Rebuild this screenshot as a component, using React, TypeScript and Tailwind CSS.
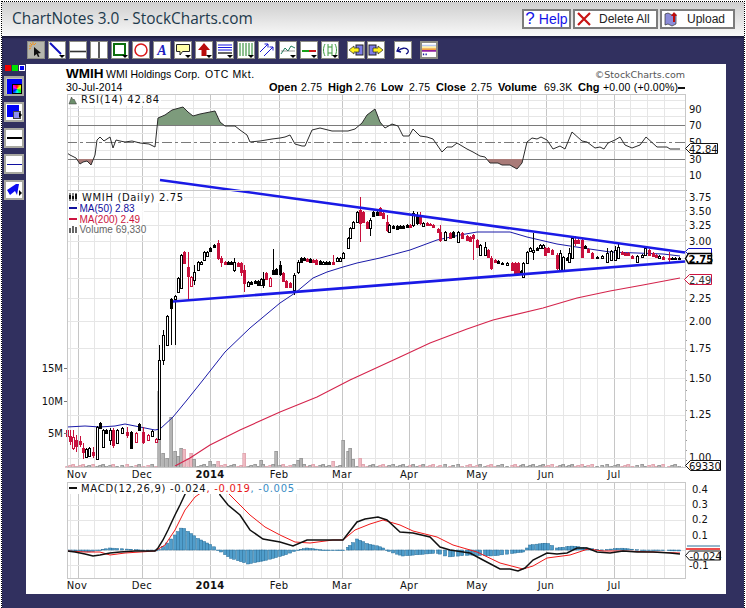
import type { ReactNode } from "react";

type Candle = [number, number, number, string, number?, number?];
type Pt = [number, number];

const candles: Candle[] = [
  [67,430,436,"r"],[70,436,441,"r",430,445],[73,437,448,"h",430,450],[76,440,446,"r",435,452],[80,441,444,"r",436,447],
  [83,448,452,"r",443,459],[86,449,457,"w"],[89,448,456,"w"],[93,452,455,"r",447,458],[97,427,459,"w"],[100,423,428,"k"],
  [103,430,447,"w"],[106,430,433,"k"],[110,430,440,"w",428,445],[113,430,445,"r",428,448],[117,430,443,"w"],[122,428,433,"w"],
  [127,432,435,"r",427,438],[131,432,448,"k"],[136,433,442,"h"],[139,424,430,"k"],[143,432,442,"r",427,444],[148,435,440,"h"],
  [152,431,436,"w"],[156,439,442,"h"],[159,360,439,"w",345,440],[163,335,360,"w",330,365],[167,316,345,"w"],
  [171,299,308,"k",298,345],[175,296,299,"w",295,345],[178,278,292,"w"],[181,255,288,"w"],[184,252,263,"r"],
  [188,267,276,"r",252,300],[191,277,286,"h"],[194,272,280,"w",265,285],[198,262,270,"w"],[201,262,264,"w"],
  [204,252,260,"w"],[207,252,256,"w"],[210,248,251,"k"],[214,245,247,"k"],[218,243,258,"r",240,260],[221,258,262,"r",256,267],
  [225,262,264,"r"],[228,262,264,"k"],[231,262,264,"k"],[234,262,270,"w",258,272],[238,263,266,"r"],[241,263,272,"r",262,276],
  [244,270,283,"r",265,292],[248,282,286,"w"],[251,282,284,"k"],[255,281,283,"k"],[258,281,285,"k"],[261,279,285,"w"],
  [263,279,285,"k",272,288],[266,273,279,"r"],[270,278,286,"h"],[273,270,274,"k",249,275],[276,269,274,"k"],[280,265,274,"k",261,276],
  [283,273,281,"r"],[286,281,287,"r"],[290,283,287,"r"],[294,275,290,"w",273,295],[298,262,272,"w",260,274],[301,258,262,"k"],
  [304,258,260,"k"],[307,259,261,"r"],[310,259,262,"k"],[313,260,262,"r"],[316,260,264,"r"],[320,261,264,"k"],[323,262,264,"w"],
  [326,262,264,"k"],[329,262,264,"k"],[333,262,264,"r",255,265],[337,258,261,"w"],[340,258,261,"w"],[343,253,258,"w"],
  [348,238,248,"w"],[350,228,238,"w"],[353,222,228,"w"],[357,212,222,"w"],[360,210,223,"r",197,242],[363,212,222,"r"],
  [367,222,228,"r"],[370,220,228,"w",218,236],[373,212,216,"k"],[377,212,215,"k"],[380,208,215,"r"],[383,213,218,"r"],
  [387,222,230,"r",215,232],[389,225,232,"w"],[393,226,228,"k"],[397,226,229,"k"],[400,226,228,"k"],[403,226,228,"k"],
  [407,225,227,"k"],[410,225,227,"r"],[413,213,225,"w",211,227],[417,215,223,"k",212,225],[420,215,223,"r",212,225],
  [423,223,226,"w"],[427,223,225,"r"],[430,224,225,"r"],[433,225,227,"r"],[438,229,232,"r"],[440,232,240,"r",225,242],
  [445,232,240,"w"],[450,233,238,"r"],[453,232,237,"k"],[458,232,242,"w"],[462,233,238,"r"],[467,236,240,"r"],[470,237,241,"r"],
  [473,235,238,"r",234,260],[477,240,247,"r"],[480,245,255,"w"],[485,247,255,"w",242,256],[488,250,257,"r"],[491,258,268,"r",256,270],
  [495,260,262,"r"],[498,261,263,"k"],[502,263,264,"w"],[507,263,265,"w"],[512,263,270,"r"],[515,263,273,"r"],[518,263,273,"r"],
  [521,271,273,"k"],[523,263,277,"w"],[527,252,263,"w"],[530,248,251,"w"],[533,250,252,"w",233,260],[537,248,250,"k"],
  [540,245,248,"w"],[543,245,248,"w"],[545,248,255,"r"],[548,248,252,"r"],[552,250,254,"r"],[557,255,268,"r",253,270],
  [560,253,270,"w",250,271],[563,257,270,"w"],[567,258,260,"k"],[569,253,262,"w",248,263],[572,238,258,"w"],[575,240,243,"r",236,246],
  [578,240,243,"r"],[582,240,257,"r"],[585,246,248,"k"],[588,249,252,"r"],[592,253,258,"r"],[597,257,258,"w"],[602,256,258,"w"],
  [607,253,262,"w",248,263],[611,251,260,"w"],[615,250,260,"w",246,261],[618,247,258,"w",243,259],[622,252,254,"r"],[625,253,255,"r"],
  [628,253,255,"r"],[632,256,258,"r"],[637,256,262,"w"],[642,255,257,"w"],[645,248,255,"w"],[649,250,255,"r"],[653,253,256,"r"],
  [656,255,257,"r"],[659,256,258,"w"],[663,257,259,"r"],[669,258,259,"r",252,263],[672,258,259,"k"],[675,258,259,"k"],[679,258,259,"k"],
];

const spikes: Pt[] = [
  [159,76],[163,14],[167,9],[171,50],[175,16],[178,11],[181,19],[184,18],[188,8],[191,14],[194,8],[211,6],[218,6],[243,14],
  [261,7],[277,16],[298,7],[301,9],[333,6],[344,27],[348,16],[350,19],[353,8],[360,9],[475,9],
];

const rsi: Pt[] = [
  [67,153],[70,155],[76,158],[80,164],[83,162],[87,161],[91,165],[95,155],[97,140],[100,137],[104,141],[110,137],[113,148],[116,140],[120,141],
  [125,142],[132,141],[140,143],[149,144],[155,147],[158,118],[165,115],[172,110],[183,107],[188,112],[193,116],[200,114],[215,111],[220,122],
  [225,126],[235,126],[240,130],[247,135],[250,142],[260,141],[272,139],[280,138],[285,137],[290,135],[295,144],[302,146],[305,146],[312,130],
  [320,128],[332,131],[345,131],[348,131],[355,129],[362,123],[367,115],[375,109],[380,122],[385,128],[392,124],[398,126],[403,136],[409,136],
  [413,129],[420,136],[427,137],[433,139],[442,152],[447,147],[452,147],[457,143],[467,149],[473,152],[480,156],[485,157],[490,163],[498,163],
  [502,165],[510,165],[517,169],[522,163],[527,142],[532,138],[537,139],[541,137],[547,140],[553,149],[560,146],[565,149],[572,132],[582,141],
  [587,142],[595,148],[600,147],[604,149],[608,143],[615,140],[620,137],[625,145],[632,148],[640,145],[646,137],[657,147],[667,147],[670,149],[680,149],
];

const ma50: Pt[] = [
  [67,427],[85,426],[100,427],[115,426],[125,424],[140,427],[155,430],[160,429],[173,417],[187,400],[203,380],[225,352],[250,328],[280,303],[295,293],
  [313,278],[327,272],[343,267],[357,263],[380,258],[410,250],[437,240],[460,235],[477,232],[510,232],[527,237],[557,244],[583,248],[610,252],[637,253],[663,254],[680,256],
];
const ma200: Pt[] = [
  [175,466],[190,458],[210,445],[240,430],[280,412],[317,397],[350,380],[400,357],[430,343],[467,329],[493,320],[543,308],[577,298],[610,291],[643,285],[680,278],
];
const macd: Pt[] = [
  [67,551],[75,552],[85,554],[93,556],[100,555],[110,553],[120,552],[135,551],[155,551],[158,548],[163,540],[168,530],[175,515],[180,505],[187,490],[195,478],
  [215,478],[220,495],[228,505],[240,515],[250,530],[263,539],[280,542],[293,546],[307,540],[333,540],[343,540],[357,522],[365,519],[378,517],[387,520],
  [400,532],[413,533],[430,537],[440,547],[450,550],[470,553],[483,560],[500,569],[510,569],[518,571],[525,568],[533,560],[547,553],[557,554],[567,553],
  [577,548],[587,548],[597,552],[610,553],[623,551],[637,552],[653,552],[670,553],[680,554],
];
const signal: Pt[] = [
  [67,551],[85,552],[100,552],[110,555],[125,553],[155,551],[165,545],[175,530],[185,510],[195,497],[205,490],[215,486],[225,490],[240,505],[250,515],[265,527],
  [280,535],[295,542],[310,543],[333,540],[343,540],[355,530],[370,524],[383,520],[400,525],[413,531],[437,537],[453,545],[477,552],[500,563],[523,569],[533,566],
  [547,558],[570,555],[588,549],[603,551],[623,551],[653,552],[680,553],
];
const hist: Pt[] = [
  [67,550],[90,552],[110,548],[157,551],[165,545],[175,535],[182,527],[197,538],[213,546],[218,550],[230,558],[248,564],[267,560],[285,555],[298,550],[307,548],
  [323,550],[345,550],[357,539],[368,544],[378,546],[383,548],[390,552],[403,556],[437,553],[448,557],[470,555],[493,556],[523,552],[530,545],[547,543],[557,548],
  [573,546],[587,548],[603,550],[620,548],[640,550],[680,551],
];

const pts = (p: Pt[]) => p.map((a) => a.join(",")).join(" ");

const lerp = (p: Pt[], x: number) => {
  for (let i = 1; i < p.length; i++) {
    if (x <= p[i][0]) {
      const t = (x - p[i - 1][0]) / (p[i][0] - p[i - 1][0]);
      return p[i - 1][1] + t * (p[i][1] - p[i - 1][1]);
    }
  }
  return p[p.length - 1][1];
};

const majors = [78, 142, 210, 279, 342, 409, 477, 546, 614];
const minors = [70, 94, 110, 126, 158, 175, 193, 226, 243, 261, 296, 312, 327, 358, 375, 392, 425, 441, 458, 493, 511, 528, 563, 580, 597, 630, 647, 664];
const months: [string, number][] = [["Nov", 77], ["Dec", 142], ["2014", 210], ["Feb", 279], ["Mar", 342], ["Apr", 409], ["May", 477], ["Jun", 546], ["Jul", 614]];
const rsiGrid = [100, 108, 116, 133, 150, 167, 176, 184];
const priceGrid = [197, 211, 225, 241, 258, 278, 298, 321, 348, 378, 415, 458];
const macdGrid = [489, 505, 520, 535, 550, 565];

function Grid({ top, bottom }: { top: number; bottom: number }) {
  return (
    <g shapeRendering="crispEdges">
      {minors.map((x) => (
        <line key={x} x1={x} x2={x} y1={top} y2={bottom} stroke="#e6e6e6" />
      ))}
      {majors.map((x) => (
        <line key={x} x1={x} x2={x} y1={top} y2={bottom} stroke="#c6c6c6" />
      ))}
    </g>
  );
}

function Label({ x, y, children, fill = "#111", anchor = "start", weight, spacing = 0.3 }: { x: number; y: number; children: ReactNode; fill?: string; anchor?: "start" | "middle" | "end"; weight?: string; spacing?: number }) {
  return (
    <text x={x} y={y} fill={fill} textAnchor={anchor} fontWeight={weight} letterSpacing={spacing}>
      {children}
    </text>
  );
}

function Chart() {
  return (
    <svg viewBox="26 64 700 530" className="h-[530px] w-[700px] bg-white font-['DejaVu_Sans',sans-serif] text-[10px]">
      <defs>
        <clipPath id="above70"><rect x="60" y="94" width="630" height="31" /></clipPath>
        <clipPath id="below30"><rect x="60" y="159" width="630" height="30" /></clipPath>
        <clipPath id="macdPanel"><rect x="67" y="482" width="618" height="96" /></clipPath>
      </defs>

      {/* heading */}
      <text x="66" y="78" fontSize="13.5" fontWeight="700" fontFamily="Liberation Sans">WMIH</text>
      <text x="106" y="78" fontSize="10.5" fontFamily="Liberation Sans">WMI Holdings Corp.</text>
      <text x="205" y="78" fontSize="10.5" fontFamily="Liberation Sans" letterSpacing="0.6">OTC Mkt.</text>
      <text x="66" y="91" fontSize="10.5" fontFamily="Liberation Sans" letterSpacing="0.1">30-Jul-2014</text>
      <text x="685" y="78" fill="#555" textAnchor="end" fontSize="9.500">©StockCharts.com</text>
      <g fontSize="11" fontFamily="Liberation Sans">
        {([["Open", 269], ["High", 328], ["Low", 381], ["Close", 436], ["Volume", 498], ["Chg", 578]] as [string, number][]).map(([t, x]) => (
          <text key={t} x={x} y="91" fontWeight="700">{t}</text>
        ))}
        {([["2.75", 301], ["2.76", 355], ["2.75", 409], ["2.75", 471], ["69.3K", 544], ["+0.00 (+0.00%)", 603]] as [string, number][]).map(([t, x]) => (
          <text key={x} x={x} y="91" fontSize="10.5" letterSpacing="0.2">{t}</text>
        ))}
      </g>
      <rect x="678" y="87" width="7" height="2" fill="#111" />

      {/* RSI panel */}
      <Grid top={94} bottom={190} />
      <g shapeRendering="crispEdges">
        {rsiGrid.map((y) => (
          <line key={y} x1="67" x2="685" y1={y} y2={y} stroke="#e6e6e6" />
        ))}
        <line x1="67" x2="685" y1="125" y2="125" stroke="#7a7a7a" />
        <line x1="67" x2="685" y1="159" y2="159" stroke="#7a7a7a" />
        <line x1="67" x2="685" y1="142" y2="142" stroke="#7a7a7a" strokeDasharray="10 3 3 3" />
      </g>
      <polygon points={pts(rsi)} fill="#7d9b7c" clipPath="url(#above70)" />
      <polygon points={pts(rsi)} fill="#a97b78" clipPath="url(#below30)" />
      <polyline points={pts(rsi)} fill="none" stroke="#2c2c2c" strokeWidth="1" />
      <rect x="67" y="94" width="618" height="96" fill="none" stroke="#c8c8c8" shapeRendering="crispEdges" />
      <rect x="68" y="95" width="93" height="11" fill="white" fillOpacity="0.9" />
      <path d="M69 104l2.5-7 1.5 3 1-1 2.5 5z" fill="#6d8f6c" stroke="#333" strokeWidth="0.5" />
      <Label x={81} y={103} spacing={0.8}>RSI(14) 42.84</Label>
      <g fill="#111">
        <text x="689" y="113">90</text>
        <text x="689" y="129">70</text>
        <text x="689" y="146">50</text>
        <text x="689" y="163">30</text>
        <text x="689" y="179">10</text>
      </g>

      {/* price panel */}
      <Grid top={190} bottom={467} />
      <g shapeRendering="crispEdges">
        {priceGrid.map((y) => (
          <line key={y} x1="67" x2="685" y1={y} y2={y} stroke="#e6e6e6" />
        ))}
      </g>
      <g shapeRendering="crispEdges">
        {candles.map(([x, , , kind], i) => {
          const s = spikes.find((p) => Math.abs(p[0] - x) < 1.5);
          const h = s ? s[1] : 1 + ((i * 7) % 3);
          const red = kind === "r" || kind === "h";
          return <rect key={i} x={x - 1.5} y={467 - h} width="3" height={h} fill={red ? "#efb9c1" : "#b4b4b4"} stroke={red ? "#d99ca8" : "#8a8a8a"} strokeWidth="0.6" />;
        })}
      </g>
      <polyline points={pts(ma200)} fill="none" stroke="#d4244c" strokeWidth="1.1" />
      <polyline points={pts(ma50)} fill="none" stroke="#1a1aa8" strokeWidth="1" />
      <g shapeRendering="crispEdges">
        {candles.map(([x, top, bot, kind, wt, wb], i) => {
          const red = kind === "r" || kind === "h";
          const color = red ? "#c8103c" : "#000";
          const fill = kind === "w" || kind === "h" ? "#fff" : color;
          return (
            <g key={i}>
              <line x1={x + 0.5} x2={x + 0.5} y1={wt ?? top - 1} y2={wb ?? bot + 1} stroke={color} />
              <rect x={x - 0.5} y={top + 0.5} width="2" height={bot - top} fill={fill} stroke={color} />
            </g>
          );
        })}
      </g>
      <line x1="160" y1="180" x2="685" y2="252.5" stroke="#1a1ae6" strokeWidth="2.6" />
      <line x1="173" y1="301.5" x2="685" y2="261.5" stroke="#1a1ae6" strokeWidth="2.6" />
      <line x1="67" x2="685" y1="467" y2="467" stroke="#bbb" strokeDasharray="1 2" />
      <rect x="67" y="190" width="618" height="277" fill="none" stroke="#c8c8c8" shapeRendering="crispEdges" />
      <line x1="686.5" x2="686.5" y1="190" y2="467" stroke="#999" strokeDasharray="1 9" />

      <rect x="68" y="192" width="116" height="11" fill="white" fillOpacity="0.85" />
      <rect x="68" y="204" width="76" height="31" fill="white" fillOpacity="0.85" />
      <path d="M70 193v8M73 193v8M76 193v8" stroke="#111" strokeWidth="1" />
      <path d="M69 195h2v4h-2zM72 196h2v3h-2zM75 194h2v5h-2z" fill="#111" />
      <Label x={82} y={201} spacing={0.65}>WMIH (Daily) 2.75</Label>
      <g fontFamily="Liberation Sans" fontSize="10">
        <rect x="69" y="207" width="8" height="2" fill="#10109c" />
        <Label x={79.5} y={212} fill="#10109c" spacing={0}>MA(50) 2.83</Label>
        <rect x="69" y="218" width="8" height="2" fill="#cc1440" />
        <Label x={79.5} y={223} fill="#cc1440" spacing={0}>MA(200) 2.49</Label>
        <path d="M69 228h2v5h-2zM72 226h2v7h-2zM75 227h2v6h-2z" fill="#666" />
        <Label x={79.5} y={233} fill="#666" spacing={0}>Volume 69,330</Label>
      </g>

      <g fill="#111">
        {([["3.75", 201], ["3.50", 215], ["3.25", 229], ["3.00", 245], ["2.25", 302], ["2.00", 325], ["1.75", 352], ["1.50", 382], ["1.25", 418], ["1.00", 461]] as [string, number][]).map(([t, y]) => (
          <text key={t} x="689" y={y}>{t}</text>
        ))}
        <text x="63" y="372" textAnchor="end">15M</text>
        <text x="63" y="405" textAnchor="end">10M</text>
        <text x="63" y="437" textAnchor="end">5M</text>
      </g>
      <g stroke="#777" shapeRendering="crispEdges">
        {[368, 401, 433].map((y) => (
          <line key={y} x1="64" x2="67" y1={y} y2={y} />
        ))}
      </g>

      {/* value tags */}
      <path d="M685.500 148.500l5-5h27v10h-27z" fill="white" stroke="#111" />
      <text x="689" y="152.500" fill="#111">42.84</text>
      <path d="M685.500 251.500l3-3h23v6h-23z" fill="white" stroke="#1010c0" />
      <path d="M685.500 258.500l3-5h23v10h-23z" fill="white" stroke="#000" strokeWidth="1.4" />
      <text x="688.500" y="262.500" fontWeight="700" fill="#000">2.75</text>
      <path d="M684.500 279.500l5-5h22v10h-22z" fill="white" stroke="#cc1440" />
      <text x="689" y="283.500" fill="#333">2.49</text>
      <path d="M685.500 465.500l5-5h30v10h-30z" fill="white" stroke="#111" />
      <text x="689" y="469.500" fill="#111">69330</text>

      {months.map(([t, x]) => (
        <Label key={t} x={x} y={478} anchor="middle" weight={t === "2014" ? "700" : undefined}>{t}</Label>
      ))}

      {/* MACD panel */}
      <Grid top={482} bottom={578} />
      <g shapeRendering="crispEdges">
        {macdGrid.map((y) => (
          <line key={y} x1="67" x2="685" y1={y} y2={y} stroke="#e6e6e6" />
        ))}
      </g>
      <g clipPath="url(#macdPanel)">
        {candles.map(([x], i) => {
          const y = lerp(hist, x);
          return <rect key={i} x={x - 1.5} y={Math.min(y, 550)} width="3.2" height={Math.max(Math.abs(y - 550), 0.6)} fill="#4f9dcb" stroke="#2a6e98" strokeWidth="0.5" />;
        })}
        <polyline points={pts(signal)} fill="none" stroke="#f01818" strokeWidth="1" />
        <polyline points={pts(macd)} fill="none" stroke="#111" strokeWidth="1.5" />
      </g>
      <rect x="67" y="482" width="618" height="96" fill="none" stroke="#c8c8c8" shapeRendering="crispEdges" />
      <rect x="68" y="483" width="229" height="11" fill="white" />
      <rect x="69" y="487" width="8" height="2" fill="#111" />
      <text x="81" y="492" fill="#111" letterSpacing="0.7">
        MACD(12,26,9) -0.024<tspan fill="#e81818">, -0.019</tspan><tspan fill="#3a8cc4">, -0.005</tspan>
      </text>
      <g fill="#111">
        <text x="692" y="493">0.4</text>
        <text x="692" y="508">0.3</text>
        <text x="692" y="523">0.2</text>
        <text x="692" y="539">0.1</text>
        <text x="689" y="569">-0.1</text>
      </g>
      <line x1="687" x2="720" y1="546" y2="546" stroke="#2a6e98" />
      <line x1="686" x2="720" y1="549" y2="549" stroke="#e81010" strokeWidth="1.6" />
      <path d="M685.500 555.500l4-4.500h31v9h-31z" fill="white" stroke="#111" />
      <text x="689.500" y="559.500" fill="#111">-0.024</text>
      {months.map(([t, x]) => (
        <Label key={t} x={x} y={589} anchor="middle" weight={t === "2014" ? "700" : undefined}>{t}</Label>
      ))}
    </svg>
  );
}

function ToolButton({ children, active, menu, className = "" }: { children: ReactNode; active?: boolean; menu?: boolean; className?: string }) {
  return (
    <div className={`relative flex h-[18px] w-[18px] shrink-0 items-center justify-center border border-[#8c8c84] ${active ? "bg-[#b6b6ae]" : "bg-white"} ${className}`}>
      <svg viewBox="0 0 16 16" className="h-4 w-4">{children}</svg>
      {menu && <span className="absolute bottom-0 right-0 h-0 w-0 border-x-[3px] border-t-[3px] border-x-transparent border-t-black" />}
    </div>
  );
}

function SideButton({ children, active, menu }: { children: ReactNode; active?: boolean; menu?: boolean }) {
  return (
    <div className={`relative flex h-5 w-5 items-center justify-center border-2 border-[#a8a8a0] ${active ? "bg-[#c4c4bc]" : "bg-white"}`}>
      {children}
      {menu && <span className="absolute bottom-0.5 right-0 h-0 w-0 border-y-[3px] border-l-[3px] border-y-transparent border-l-black" />}
    </div>
  );
}

function Toolbar() {
  return (
    <div className="flex h-7 items-center bg-[#31305f] pl-[25px] shadow-[inset_0_2px_2px_#1c1c3c]">
      <div className="flex gap-[3px]">
        <ToolButton active>
          <path d="M6 5l7 6-3 .4 1.500 3-1.500.6-1.400-3L6 14z" fill="#111" />
          <path d="M5 0v3M1 4h3M2 1l2 2M8 1L6 3M1 7l2-1" stroke="#f09018" />
        </ToolButton>
        <ToolButton menu><path d="M1 1l11 11" stroke="#1010c0" strokeWidth="2" /></ToolButton>
        <ToolButton><path d="M0 9.500h16" stroke="#333" strokeWidth="1.600" /></ToolButton>
        <ToolButton><path d="M8 0v16" stroke="#333" strokeWidth="1.600" /></ToolButton>
        <ToolButton menu><rect x="2" y="2" width="11" height="11" fill="none" stroke="#0c6e0c" strokeWidth="2" /></ToolButton>
        <ToolButton><circle cx="8" cy="8" r="6" fill="none" stroke="#d81818" strokeWidth="1.500" /></ToolButton>
        <ToolButton><text x="8" y="13" textAnchor="middle" fontSize="14" fontWeight="700" fontStyle="italic" fill="#1c1cc0" fontFamily="Liberation Serif">A</text></ToolButton>
        <ToolButton menu><path d="M1.500 2.500h13v7h-7L5 13v-3.500H1.500z" fill="#ffffa8" stroke="#222" /></ToolButton>
        <ToolButton menu><path d="M8 1l6 7h-3.500v6h-5V8H2z" fill="#b80c0c" /></ToolButton>
        <ToolButton menu>
          <path d="M1 3h14M1 5.500h14M1 8h14" stroke="#1818e0" />
          <path d="M1 11h14" stroke="#333" strokeWidth="1.500" />
        </ToolButton>
        <ToolButton menu><path d="M2 1v13M5 1v13M8 1v13M11 1v13M14 1v13" stroke="#18801c" /></ToolButton>
        <ToolButton>
          <path d="M1 10l8-8M9 2H5.500M9 2v3.500M5 14l9-9M14 5h-3.500M14 5v3.500" fill="none" stroke="#1818d0" />
        </ToolButton>
        <ToolButton menu>
          <path d="M1 12l4-6 3 3 3-5 4 2" fill="none" stroke="#1c7c5c" />
          <path d="M1 9h14" stroke="#555" strokeWidth="0.600" />
        </ToolButton>
        <ToolButton menu>
          <path d="M1 9h7" stroke="#18a018" strokeWidth="2" />
          <path d="M8 9h7" stroke="#d01818" strokeWidth="2" />
        </ToolButton>
        <ToolButton menu>
          <path d="M3 2C1 6 1 10 3 14M13 2c2 4 2 8 0 12M6 2v12M10 2v12M6 5h4M6 11h4" fill="none" stroke="#3c9c3c" />
        </ToolButton>
      </div>
      <div className="ml-[8px] flex gap-[2px]">
        <ToolButton>
          <rect x="8" y="3" width="7" height="10" fill="#7c7ce8" stroke="#222" />
          <path d="M1 8l5-4v2h5v4H6v2z" fill="#fff21c" stroke="#222" strokeWidth="0.700" />
        </ToolButton>
        <ToolButton>
          <rect x="1" y="3" width="7" height="10" fill="#7c7ce8" stroke="#222" />
          <path d="M15 8l-5-4v2H5v4h5v2z" fill="#fff21c" stroke="#222" strokeWidth="0.700" />
        </ToolButton>
      </div>
      <div className="ml-[9px] flex gap-[8px]">
        <ToolButton>
          <path d="M4 5l-2 4 4 1M3 9c3-3 8-4 10-1 .8 1.500 0 3-2 4" fill="none" stroke="#0c0c80" strokeWidth="1.300" />
        </ToolButton>
        <ToolButton className="border-2">
          <rect x="0" y="2" width="16" height="2" fill="#b8c8f0" />
          <rect x="0" y="4" width="16" height="2" fill="#fff0a0" />
          <rect x="0" y="6" width="16" height="2" fill="#f0a040" />
          <rect x="0" y="8" width="16" height="2" fill="#9020a0" />
          <rect x="1" y="12" width="1.500" height="2" fill="#1818a0" />
          <rect x="4" y="12" width="1.500" height="2" fill="#1818a0" />
        </ToolButton>
      </div>
    </div>
  );
}

function Sidebar() {
  return (
    <div className="flex w-6 shrink-0 flex-col items-center bg-[#31305f]">
      <div className="flex h-[12px] items-center gap-px pb-1 pl-0.5">
        <span className="h-1.5 w-1.5 bg-[#f00000]" />
        <span className="h-1.5 w-1.5 bg-[#00e000]" />
        <span className="h-1.5 w-1.5 border border-white bg-[#0000f0]" />
      </div>
      <div className="flex flex-col gap-[6px]">
        <SideButton active>
          <div className="relative h-[15px] w-[15px] bg-[#0000f8]">
            <span className="absolute bottom-0 right-0 h-2.5 w-2.5 border border-black bg-[conic-gradient(#f00,#ff0,#0f0,#0ff,#00f,#f0f,#f00)]" />
          </div>
        </SideButton>
        <SideButton menu>
          <div className="relative h-[14px] w-[14px]">
            <div className="h-3 w-3 bg-[#0000f8]" />
            <span className="absolute bottom-0 right-0 h-2 w-2 border border-[#444] bg-[#9090f0]" />
          </div>
        </SideButton>
        <SideButton><div className="h-0.5 w-[15px] bg-black" /></SideButton>
        <SideButton><div className="h-px w-[15px] bg-[#1010a0]" /></SideButton>
        <SideButton menu>
          <svg viewBox="0 0 16 16" className="h-4 w-4"><path d="M1 8l9-6 3 0-2 11-2-4-5 4z" fill="#0c0cf0" /></svg>
        </SideButton>
      </div>
    </div>
  );
}

function HeadButton({ children, className = "" }: { children: ReactNode; className?: string }) {
  return (
    <div className={`flex h-[20px] items-center border-2 border-[#7c7c7c] bg-white font-['Liberation_Sans',sans-serif] text-[12px] ${className}`}>
      {children}
    </div>
  );
}

export default function App() {
  return (
    <div className="h-[608px] w-[746px] overflow-hidden bg-white pl-px pr-px pt-px">
      <div className="h-[607px] border-x border-t border-dotted border-black">
        <div className="flex h-[34px] items-center justify-between bg-gradient-to-b from-[#cfcfcf] to-[#f8f8f8] pl-[10px] pr-[9px]">
          <h1 className="font-['Open_Sans',sans-serif] text-[15.4px] font-normal text-[#1d3a4c]">ChartNotes 3.0 - StockCharts.com</h1>
          <div className="flex gap-[2px]">
            <HeadButton className="w-[49px] justify-center gap-1 text-[14px] text-[#1414e8]"><span className="text-[17px]">?</span>Help</HeadButton>
            <HeadButton className="w-[85px] gap-2 pl-[2px] text-[#222]">
              <svg viewBox="0 0 14 14" className="h-[14px] w-[14px]"><path d="M1 1l12 12M13 1L1 13" stroke="#c81414" strokeWidth="2.200" /></svg>
              Delete All
            </HeadButton>
            <HeadButton className="w-[75px] gap-[7px] pl-[2px] text-[#222]">
              <svg viewBox="0 0 16 16" className="h-4 w-4">
                <path d="M1 3l3-1 4 2 4-1v10l-4 2-4-2-3 1z" fill="#8c8cd8" stroke="#333" strokeWidth="0.700" />
                <path d="M10 1l3 4h-2v6H9V5H7z" fill="#c00c0c" />
              </svg>
              Upload
            </HeadButton>
          </div>
        </div>
        <Toolbar />
        <div className="flex h-[544px] bg-[#31305f]">
          <Sidebar />
          <Chart />
        </div>
      </div>
    </div>
  );
}
